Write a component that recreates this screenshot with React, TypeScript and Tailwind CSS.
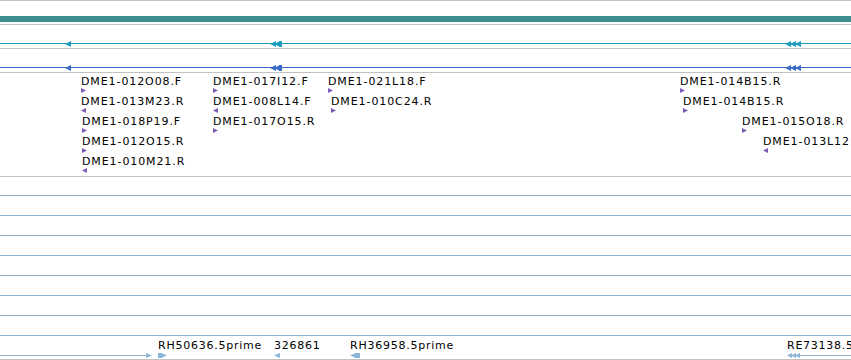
import React from "react";

const GRAY = "bg-[#c2c2c2]";

function Tri({ x, y, dir, color, w = 5, h = 5 }: { x: number; y: number; dir: "l" | "r"; color: string; w?: number; h?: number }) {
  const pts = dir === "r" ? `0,0 ${w},${h / 2} 0,${h}` : `${w},0 0,${h / 2} ${w},${h}`;
  return (
    <svg className="absolute" style={{ left: x, top: y }} width={w} height={h} viewBox={`0 0 ${w} ${h}`}>
      <polygon points={pts} fill={color} />
    </svg>
  );
}

function LineTrack({ color }: { color: string }) {
  return (
    <div className="relative h-[23px] w-full">
      <div className="absolute left-0 right-0 top-[18px] h-px" style={{ background: color }} />
      <Tri x={65} y={16} dir="l" color={color} w={6} h={6} />
      <Tri x={270} y={16} dir="l" color={color} w={6} h={6} />
      <Tri x={274} y={16} dir="l" color={color} w={6} h={6} />
      <div className="absolute top-[16px] h-[6px] w-[3px]" style={{ left: 279, background: color }} />
      <Tri x={785} y={16} dir="l" color={color} w={6} h={6} />
      <Tri x={790} y={16} dir="l" color={color} w={6} h={6} />
      <Tri x={795} y={16} dir="l" color={color} w={6} h={6} />
    </div>
  );
}

const PURPLE = "#7b5db8";

const labels: { x: number; row: number; text: string; dir: "l" | "r" }[] = [
  { x: 81, row: 0, text: "DME1-012O08.F", dir: "r" },
  { x: 81, row: 1, text: "DME1-013M23.R", dir: "l" },
  { x: 82, row: 2, text: "DME1-018P19.F", dir: "r" },
  { x: 82, row: 3, text: "DME1-012O15.R", dir: "r" },
  { x: 82, row: 4, text: "DME1-010M21.R", dir: "l" },
  { x: 213, row: 0, text: "DME1-017I12.F", dir: "r" },
  { x: 213, row: 1, text: "DME1-008L14.F", dir: "l" },
  { x: 213, row: 2, text: "DME1-017O15.R", dir: "r" },
  { x: 328, row: 0, text: "DME1-021L18.F", dir: "r" },
  { x: 331, row: 1, text: "DME1-010C24.R", dir: "r" },
  { x: 680, row: 0, text: "DME1-014B15.R", dir: "r" },
  { x: 683, row: 1, text: "DME1-014B15.R", dir: "r" },
  { x: 742, row: 2, text: "DME1-015O18.R", dir: "r" },
  { x: 763, row: 3, text: "DME1-013L12", dir: "l" },
];

const font = "font-['DejaVu_Sans',sans-serif] text-[11px] leading-[11px] tracking-[0.9px] text-black whitespace-nowrap";
const font2 = "font-['DejaVu_Sans',sans-serif] text-[11px] leading-[11px] tracking-[0.75px] text-black whitespace-nowrap";

const LB = "#8ab6da";

export default function App() {
  return (
    <div className="w-[851px] h-[360px] overflow-hidden bg-white flex flex-col">
      <div className={`h-px w-full ${GRAY}`} />
      <div className="h-[23px] w-full pt-[15px]">
        <div className="h-[6px] w-full bg-[#3f8e8e]" />
      </div>
      <div className={`h-px w-full ${GRAY}`} />
      <LineTrack color="#1e9cbc" />
      <div className={`h-px w-full ${GRAY}`} />
      <LineTrack color="#3a6cc4" />
      <div className={`h-px w-full ${GRAY}`} />
      <div className="relative h-[103px] w-full">
        {labels.map((l, i) => (
          <React.Fragment key={i}>
            <div className={`absolute ${font}`} style={{ left: l.x, top: 3 + l.row * 20 }}>
              {l.text}
            </div>
            <Tri x={l.x} y={15 + l.row * 20} dir={l.dir} color={PURPLE} />
          </React.Fragment>
        ))}
      </div>
      <div className={`h-px w-full ${GRAY}`} />
      <div className="h-[18px]" />
      <div className="flex flex-col gap-[19px]">
        {Array.from({ length: 8 }).map((_, i) => (
          <div key={i} className="h-px w-full bg-[#8ab6da]" />
        ))}
      </div>
      <div className="relative h-[23px] w-full">
        <div className="absolute left-0 top-[19px] h-px w-[148px]" style={{ background: LB }} />
        <Tri x={146} y={17} dir="r" color={LB} w={6} h={5} />
        <div className="absolute top-[17px] h-[5px] w-[4px]" style={{ left: 158, background: LB }} />
        <Tri x={161} y={17} dir="r" color={LB} w={6} h={5} />
        <div className={`absolute ${font2}`} style={{ left: 158, top: 4 }}>RH50636.5prime</div>
        <Tri x={274} y={17} dir="l" color={LB} w={6} h={5} />
        <div className={`absolute ${font2}`} style={{ left: 274, top: 4 }}>326861</div>
        <Tri x={350} y={17} dir="l" color={LB} w={6} h={5} />
        <div className="absolute top-[17px] h-[5px] w-[5px]" style={{ left: 355, background: LB }} />
        <div className={`absolute ${font2}`} style={{ left: 350, top: 4 }}>RH36958.5prime</div>
        <Tri x={787} y={17} dir="l" color={LB} w={5} h={5} />
        <Tri x={791} y={17} dir="l" color={LB} w={5} h={5} />
        <Tri x={795} y={17} dir="l" color={LB} w={5} h={5} />
        <div className="absolute right-0 top-[19px] h-px" style={{ left: 799, background: LB }} />
        <div className={`absolute ${font2}`} style={{ left: 787, top: 4 }}>RE73138.5</div>
      </div>
      <div className={`h-px w-full ${GRAY}`} />
    </div>
  );
}
